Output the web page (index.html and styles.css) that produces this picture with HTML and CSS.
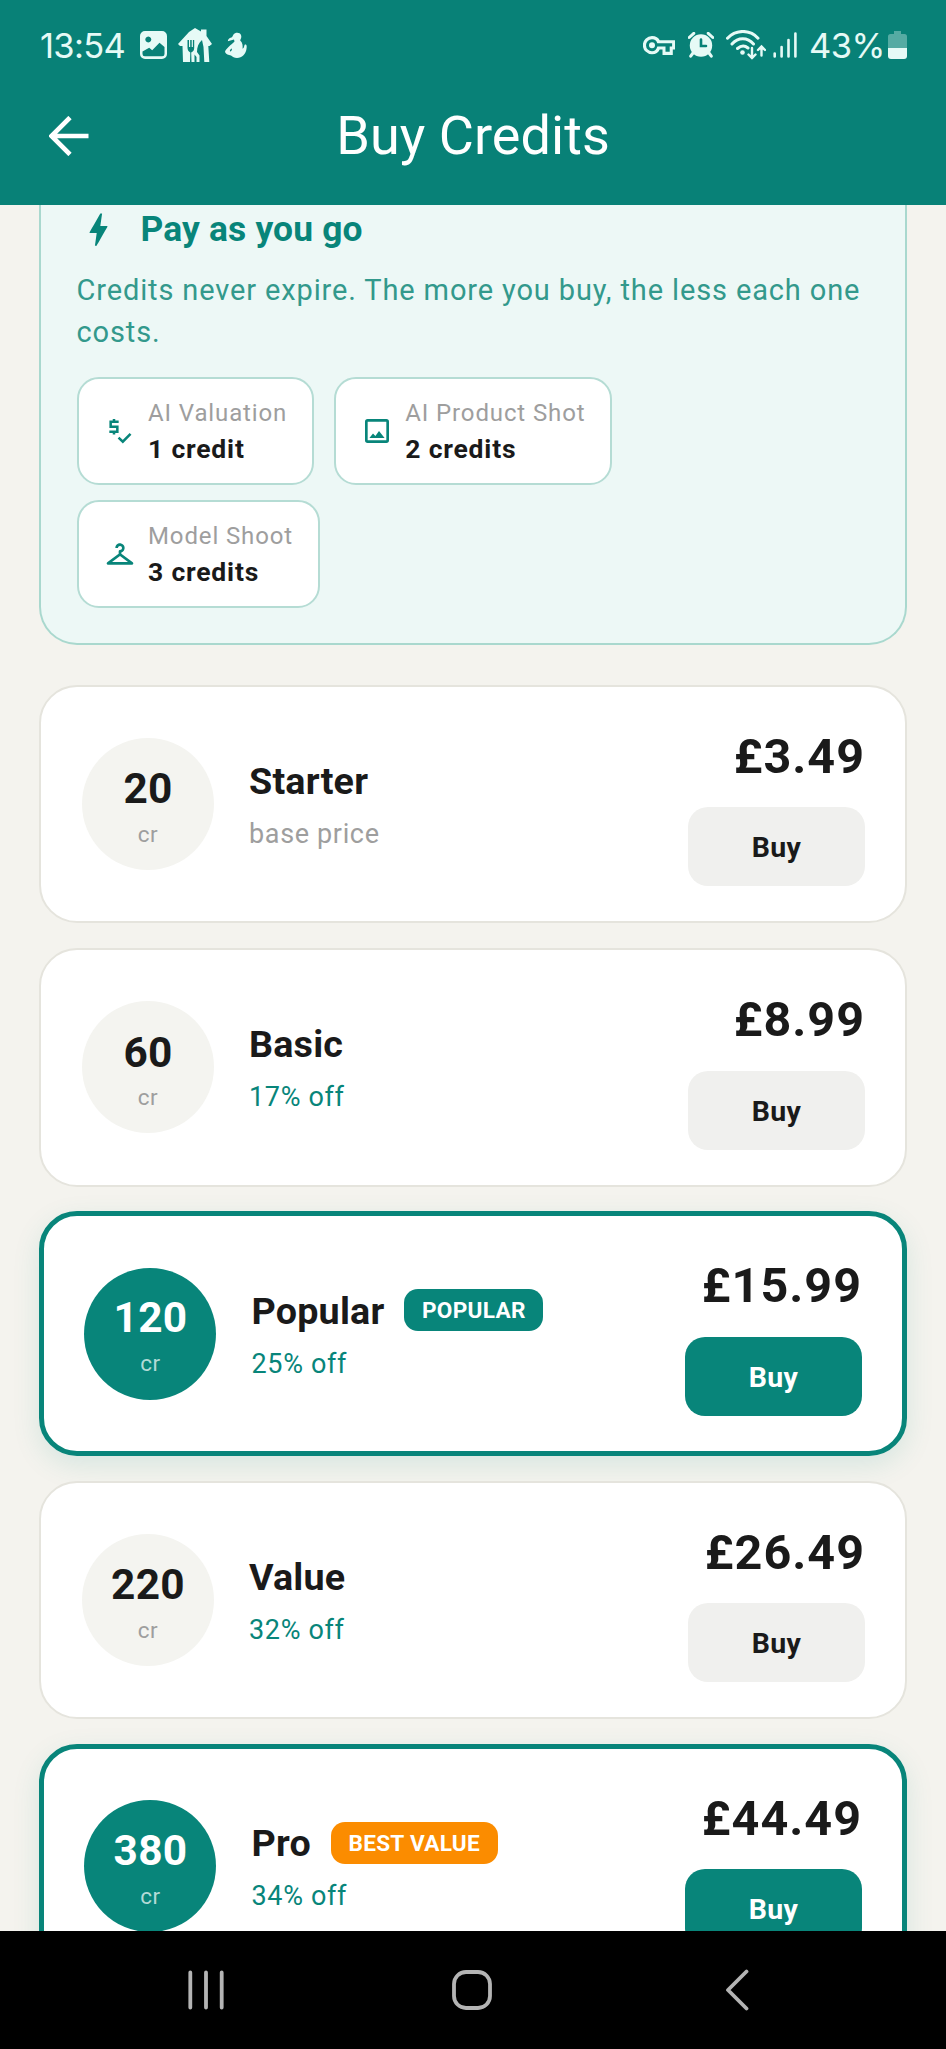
FILE: index.html
```html
<!DOCTYPE html>
<html lang="en">
<head>
<meta charset="utf-8">
<title>Buy Credits</title>
<link rel="stylesheet" href="styles.css">
</head>
<body>
<div class="screen">
  <header class="header">
    <div class="status">
      <div class="status-left">
        <span class="clock">13:54</span>
        <svg class="s-image" viewBox="0 0 27 28"><path fill-rule="evenodd" d="M5 0h17a5 5 0 0 1 5 5v18a5 5 0 0 1-5 5H5a5 5 0 0 1-5-5V5a5 5 0 0 1 5-5zM8.300 5.500a3 3 0 1 0 .01 0zM2.500 20.500v2.500a2.300 2.300 0 0 0 2.300 2.300h17.400a2.300 2.300 0 0 0 2.300-2.300V16l-5-4.300-7.300 7.500-3-2.400z"/></svg>
        <svg class="s-house" viewBox="0 0 34 34"><path d="M0 16L11 4l6-4 6 3.500V1.500h5.500V8l5.500 8-2.500 2h-1.200l1 16h-5l-.8-15-1.500-7c-3.500 3-5 7-5 12l2.500 3.500V34h-3v-5l-2-2.500V34h-3l-.3-9.500c2.500-1 3-3 3-5V12h-1.300v7h-1.200v-7h-1.500v7h-1.200v-7H9.500v7.500c0 2 .8 4 2.800 5L12 34H5l-.5-16H2z"/></svg>
        <svg class="s-bird" viewBox="0 0 22 27"><path d="M8.500 2.500C10 0 15 0 16 3c1 2.500-.5 4-.8 5.500 2.500 2 2.600 5 2.400 8.200C19.500 16 19 13 20 12.500c2-.5 2 2.500 1.300 5.500-1 4-4 8-9.300 8-3 0-4-1-6-2.500-2.500-.5-5-1-6-3.500 0-2 2-3 3.500-5C6 12.500 8 11 9.500 9.500L9 7.500 2.800 9.200c0-2.500 2.200-3.200 4.200-4zM5 19.500c1.500-.2 2-1.500 2-3-1.500.5-2.500 1.500-2 3z" fill-rule="evenodd"/></svg>
      </div>
      <div class="status-right">
        <svg class="s-key" viewBox="0 0 32 19"><path fill-rule="evenodd" d="M9 0c4 0 6.500 2 7.700 4.200H32v9.300h-2.200V19H19.500v-5.500h-2.800C15.500 16.500 13 18.300 9 18.300A9 9 0 0 1 9 0zm0 3.200a6 6 0 1 0 0 12c3 0 4.500-1.600 5.300-4.700h8.200v5.300h4.200v-5.300h2.400V7.300H14.300C13.500 4.700 12 3.200 9 3.200z"/><circle cx="9" cy="9.200" r="3"/></svg>
        <svg class="s-alarm" viewBox="0 0 26 26"><circle cx="13" cy="13.500" r="11.200"/><path class="ln" d="M1.200 5.500L5.800 1.300M24.800 5.500l-4.600-4.200M5 21l-2.300 3.200M21 21l2.300 3.200"/><path class="cut" d="M13 7.500V14h5"/></svg>
        <svg class="s-wifi" viewBox="0 0 40 31"><path class="ln" d="M1.500 8.200C10 -.8 24 -.8 32 8.200M6 14c6-7 15.500-7 21.500 0M11.500 18.500c3.500-3 7.500-3 10.500-.5"/><circle cx="16.500" cy="22.500" r="2.300"/><path class="thin" d="M26 18v10m-3.500-3.500L26 28l3.500-3.500M35.500 25.500v-9M32 20l3.500-3.500L39 20"/></svg>
        <svg class="s-signal" viewBox="0 0 24 26"><path d="M1.700 21.500v3M8.600 15v9.500M15.500 8v16.500M22.400 1.500v23"/></svg>
        <span class="percent">43%</span>
        <svg class="s-battery" viewBox="0 0 19 28"><path opacity=".35" d="M6 0h7v3h3.500A2.500 2.500 0 0 1 19 5.500V17H0V5.500A2.500 2.500 0 0 1 2.500 3H6z"/><path d="M0 17h19v8a3 3 0 0 1-3 3H3a3 3 0 0 1-3-3z"/></svg>
      </div>
    </div>
    <div class="toolbar">
      <svg class="back" viewBox="0 0 40 40"><path d="M39.500 20H3M21 1.500L2.500 20 21 38.500"/></svg>
      <h1 class="title">Buy Credits</h1>
    </div>
  </header>

  <main class="content">
    <section class="info">
      <div class="info-head">
        <svg class="bolt" viewBox="0 0 24 24"><path d="M11 21h-1l1-7H7.500c-.88 0-.33-.75-.31-.78C8.480 10.940 10.420 7.540 13.010 3h1l-1 7h3.510c.4 0 .62.19.4.66C12.970 17.550 11 21 11 21z"/></svg>
        <h2 class="info-title">Pay as you go</h2>
      </div>
      <p class="info-text">Credits never expire. The more you buy, the less each one costs.</p>
      <div class="chips">
        <div class="chip">
          <svg class="chip-icon" viewBox="0 0 24 24"><path class="stroke" d="M11 5H5v3.750h5v3.750H4M7.500 3v2M7.500 12.500v2.200M10.900 17l3.200 3 5.800-5.900"/></svg>
          <div class="chip-body"><span class="chip-label">AI Valuation</span><span class="chip-cost">1 credit</span></div>
        </div>
        <div class="chip">
          <svg class="chip-icon" viewBox="0 0 24 24"><path d="M19 5v14H5V5h14m0-2H5a2 2 0 0 0-2 2v14a2 2 0 0 0 2 2h14a2 2 0 0 0 2-2V5a2 2 0 0 0-2-2zM6.300 17.200l2.700-3.400 1.800 2 2.700-3.800 4.200 5.200z"/></svg>
          <div class="chip-body"><span class="chip-label">AI Product Shot</span><span class="chip-cost">2 credits</span></div>
        </div>
        <div class="chip">
          <svg class="chip-icon" viewBox="0 0 24 24"><path d="M21.600 18.200L13 11.750v-.91c1.650-.49 2.800-2.170 2.430-4.050-.26-1.310-1.300-2.400-2.610-2.700C10.540 3.570 8.500 5.300 8.500 7.500h2c0-.83.67-1.500 1.500-1.500s1.500.67 1.500 1.500c0 .84-.69 1.520-1.530 1.500-.54-.01-.97.45-.97.99v1.760L2.400 18.200c-.77.58-.36 1.800.6 1.800h18c.96 0 1.370-1.220.6-1.800zM6 18l6-4.500 6 4.500H6z"/></svg>
          <div class="chip-body"><span class="chip-label">Model Shoot</span><span class="chip-cost">3 credits</span></div>
        </div>
      </div>
    </section>

    <section class="plans">
      <article class="plan">
        <div class="amount"><span class="amount-num">20</span><span class="amount-unit">cr</span></div>
        <div class="details"><div class="name-row"><h3 class="name">Starter</h3></div><span class="note muted">base price</span></div>
        <div class="purchase"><span class="price">£3.49</span><button class="buy">Buy</button></div>
      </article>
      <article class="plan">
        <div class="amount"><span class="amount-num">60</span><span class="amount-unit">cr</span></div>
        <div class="details"><div class="name-row"><h3 class="name">Basic</h3></div><span class="note">17% off</span></div>
        <div class="purchase"><span class="price">£8.99</span><button class="buy">Buy</button></div>
      </article>
      <article class="plan featured">
        <div class="amount"><span class="amount-num">120</span><span class="amount-unit">cr</span></div>
        <div class="details"><div class="name-row"><h3 class="name">Popular</h3><span class="badge">POPULAR</span></div><span class="note">25% off</span></div>
        <div class="purchase"><span class="price">£15.99</span><button class="buy">Buy</button></div>
      </article>
      <article class="plan">
        <div class="amount"><span class="amount-num">220</span><span class="amount-unit">cr</span></div>
        <div class="details"><div class="name-row"><h3 class="name">Value</h3></div><span class="note">32% off</span></div>
        <div class="purchase"><span class="price">£26.49</span><button class="buy">Buy</button></div>
      </article>
      <article class="plan featured">
        <div class="amount"><span class="amount-num">380</span><span class="amount-unit">cr</span></div>
        <div class="details"><div class="name-row"><h3 class="name">Pro</h3><span class="badge best">BEST VALUE</span></div><span class="note">34% off</span></div>
        <div class="purchase"><span class="price">£44.49</span><button class="buy">Buy</button></div>
      </article>
    </section>
  </main>

  <nav class="navbar">
    <svg class="nav-recents" viewBox="0 0 36 40"><path d="M2.300 2.500v35M18 2.500v35M33.700 2.500v35"/></svg>
    <svg class="nav-home" viewBox="0 0 40 40"><rect x="2" y="2" width="36" height="36" rx="12"/></svg>
    <svg class="nav-back" viewBox="0 0 24 42"><path d="M21.500 2.500L3 21l18.500 18.500"/></svg>
  </nav>
</div>
</body>
</html>
```

FILE: styles.css
```css
* { box-sizing: border-box; }

body {
  margin: 0;
  background: #f4f3ee;
  font-family: Roboto, "Liberation Sans", sans-serif;
  color: #1a1a1a;
}

h1, h2, h3, p { margin: 0; }

.screen {
  width: 946px;
  height: 2049px;
  display: flex;
  flex-direction: column;
  overflow: hidden;
}

/* Header */
.header {
  flex: none;
  height: 205px;
  background: #088177;
  color: #fff;
}

.status {
  height: 90px;
  padding: 0 39px 0 40px;
  display: flex;
  justify-content: space-between;
  align-items: center;
  color: #e6faf6;
  fill: #e6faf6;
  font-family: Inter, Roboto, sans-serif;
  font-size: 34.5px;
}

.status-left, .status-right { display: flex; align-items: center; }
.status svg { flex: none; display: block; }
.clock { width: 100px; letter-spacing: -0.7px; white-space: nowrap; }
.percent { width: 79px; letter-spacing: -0.6px; white-space: nowrap; }

.s-image { width: 27px; height: 28px; }
.s-house { width: 34px; height: 34px; margin-left: 11px; }
.s-bird { width: 22px; height: 27px; margin-left: 13px; }
.s-key { width: 32px; height: 19px; margin-right: 13px; }
.s-alarm { width: 26px; height: 26px; margin-right: 12px; }
.s-wifi { width: 40px; height: 31px; margin-right: 7px; }
.s-signal { width: 24px; height: 26px; margin-right: 12px; }
.s-battery { width: 19px; height: 28px; }

.ln, .thin, .cut, .s-signal path { fill: none; stroke: #e6faf6; stroke-width: 3; stroke-linecap: round; }
.s-signal path { stroke-width: 2.6; }
.thin { stroke-width: 2.4; }
.cut { stroke: #088177; stroke-width: 2.6; }

.toolbar {
  height: 92px;
  padding: 0 49px 0 49px;
  display: grid;
  grid-template-columns: 40px 1fr 40px;
  align-items: center;
}

.back { width: 40px; height: 40px; fill: none; stroke: #fff; stroke-width: 4.6; }

.title {
  font-size: 54px;
  font-weight: 400;
  letter-spacing: 0.050px;
  line-height: 64px;
  text-align: center;
}

/* Scrolling content */
.content {
  flex: none;
  height: 1726px;
  padding: 0 39px;
  overflow: hidden;
}

.info {
  height: 440px;
  padding: 0 35.500px;
  border: 2px solid #a9d8ce;
  border-top: 0;
  border-radius: 0 0 38px 38px;
  background: #edf8f6;
}

.info-head { height: 48px; display: flex; align-items: center; }
.bolt { width: 43px; height: 43px; fill: #08857a; }

.info-title {
  margin-left: 21px;
  font-size: 35.4px;
  font-weight: 700;
  line-height: 48px;
  letter-spacing: 0.150px;
  color: #08857a;
}

.info-text {
  margin-top: 16px;
  font-size: 29px;
  line-height: 42.4px;
  letter-spacing: 0.870px;
  color: #33998c;
}

.chips { margin-top: 23px; display: flex; flex-wrap: wrap; gap: 15px 19.500px; }

.chip {
  height: 108px;
  padding: 0 25px;
  display: flex;
  align-items: center;
  gap: 12.5px;
  border: 2px solid #b5dcd4;
  border-radius: 22px;
  background: #fff;
}

.chip-icon { width: 32px; height: 32px; fill: #08857a; }
.stroke { fill: none; stroke: #08857a; stroke-width: 1.9; }
.chip-body { display: flex; flex-direction: column; line-height: 36px; white-space: nowrap; }
.chip-label { font-size: 24px; letter-spacing: 0.88px; color: #9e9e9e; }
.chip-cost { font-size: 26.5px; font-weight: 700; letter-spacing: 0.8px; }

/* Credit packs */
.plans { margin-top: 39.6px; display: flex; flex-direction: column; gap: 24.8px; }

.plan {
  flex: none;
  height: 238.6px;
  padding: 0 40px 0 40.500px;
  display: flex;
  align-items: center;
  border: 2px solid #e5e4dd;
  border-radius: 38px;
  background: #fff;
}

.plan.featured {
  height: 244.4px;
  padding-left: 40px;
  border: 5px solid #08857a;
  box-shadow: 0 9px 28px rgba(0, 137, 123, 0.12);
}

.amount {
  flex: none;
  width: 132px;
  height: 132px;
  display: flex;
  flex-direction: column;
  align-items: center;
  justify-content: center;
  border-radius: 50%;
  background: #f4f4f0;
}

.amount-num { padding: 1px 0 0 1px; font-size: 42.4px; font-weight: 700; line-height: 59.4px; letter-spacing: 0.3px; }
.amount-unit { padding-left: 1px; font-size: 22.5px; line-height: 30.8px; letter-spacing: 0.6px; color: #9e9e9e; }
.featured .amount { background: #08857a; color: #fff; }
.featured .amount-num { padding-top: 0; line-height: 60.4px; }
.featured .amount-unit { color: #b3dad6; }

.details { flex: 1; margin-left: 35.500px; display: flex; flex-direction: column; }
.name-row { height: 59px; display: flex; align-items: center; gap: 20px; }
.name { font-size: 37.7px; font-weight: 700; line-height: 59px; letter-spacing: 0.2px; }
.note { padding-top: 1px; font-size: 27px; line-height: 44px; letter-spacing: 0.65px; color: #08857a; }
.note.muted { color: #9e9e9e; }

.badge {
  height: 42px;
  margin-bottom: 2px;
  padding: 0 17.5px;
  border-radius: 14px;
  background: #08857a;
  color: #fff;
  font-size: 22.6px;
  font-weight: 700;
  line-height: 43px;
  letter-spacing: 0.3px;
}

.badge.best { background: #fb8c00; }

.purchase { display: flex; flex-direction: column; align-items: flex-end; }
.price { padding-top: 1px; font-size: 48.5px; font-weight: 700; line-height: 68px; letter-spacing: 1px; }

.buy {
  width: 177px;
  height: 79px;
  margin-top: 16.500px;
  padding: 2px 0 0;
  border: 0;
  border-radius: 20px;
  background: #f0f0ee;
  color: #1a1a1a;
  font: 700 28.5px/77px Roboto, "Liberation Sans", sans-serif;
  letter-spacing: 0.4px;
}

.featured .buy { background: #08857a; color: #fff; }

/* System navigation */
.navbar {
  flex: none;
  height: 118px;
  padding: 0 197px 0 188px;
  display: flex;
  align-items: center;
  background: #000;
  fill: none;
  stroke: #b4b4b4;
  stroke-width: 3.800;
  stroke-linecap: round;
  stroke-linejoin: round;
}

.nav-recents { width: 36px; height: 40px; }
.nav-home { width: 40px; height: 40px; margin-left: 227.500px; }
.nav-back { width: 24px; height: 42px; margin-left: auto; }
```
